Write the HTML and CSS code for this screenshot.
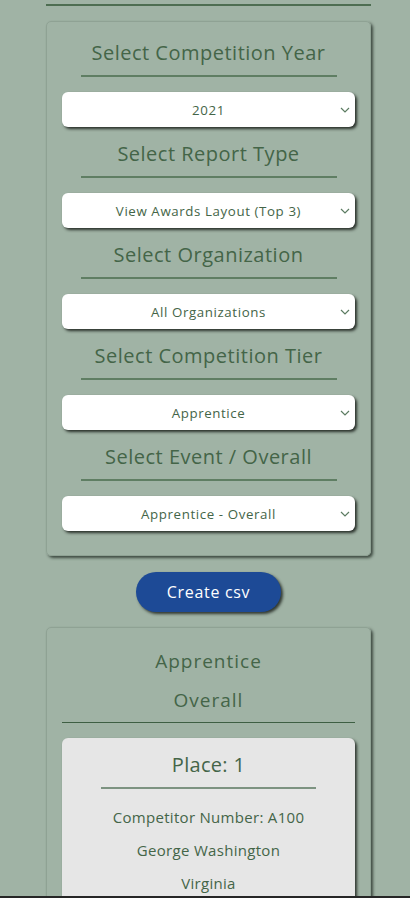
FILE: index.html
```html
<!DOCTYPE html>
<html lang="en">
<head>
<meta charset="utf-8">
<title>Competition Report</title>
<link rel="stylesheet" href="styles.css">
</head>
<body>
<div class="page">
  <div class="top-rule"></div>

  <section class="card filters">
    <div class="group">
      <h2 class="label">Select Competition Year</h2>
      <div class="rule"></div>
      <div class="select-wrap">
        <select class="select"><option>2021</option></select>
        <svg class="chev" width="10" height="6" viewBox="0 0 10 6"><path d="M1 1l4 4 4-4" fill="none" stroke="#5c7c62" stroke-width="1.2"/></svg>
      </div>
    </div>
    <div class="group">
      <h2 class="label">Select Report Type</h2>
      <div class="rule"></div>
      <div class="select-wrap">
        <select class="select"><option>View Awards Layout (Top 3)</option></select>
        <svg class="chev" width="10" height="6" viewBox="0 0 10 6"><path d="M1 1l4 4 4-4" fill="none" stroke="#5c7c62" stroke-width="1.2"/></svg>
      </div>
    </div>
    <div class="group">
      <h2 class="label">Select Organization</h2>
      <div class="rule"></div>
      <div class="select-wrap">
        <select class="select"><option>All Organizations</option></select>
        <svg class="chev" width="10" height="6" viewBox="0 0 10 6"><path d="M1 1l4 4 4-4" fill="none" stroke="#5c7c62" stroke-width="1.2"/></svg>
      </div>
    </div>
    <div class="group">
      <h2 class="label">Select Competition Tier</h2>
      <div class="rule"></div>
      <div class="select-wrap">
        <select class="select"><option>Apprentice</option></select>
        <svg class="chev" width="10" height="6" viewBox="0 0 10 6"><path d="M1 1l4 4 4-4" fill="none" stroke="#5c7c62" stroke-width="1.2"/></svg>
      </div>
    </div>
    <div class="group">
      <h2 class="label">Select Event / Overall</h2>
      <div class="rule"></div>
      <div class="select-wrap">
        <select class="select"><option>Apprentice - Overall</option></select>
        <svg class="chev" width="10" height="6" viewBox="0 0 10 6"><path d="M1 1l4 4 4-4" fill="none" stroke="#5c7c62" stroke-width="1.2"/></svg>
      </div>
    </div>
  </section>

  <div class="btn-row">
    <button class="btn">Create csv</button>
  </div>

  <section class="card results">
    <h3 class="res-title">Apprentice</h3>
    <h3 class="res-title">Overall</h3>
    <div class="res-rule"></div>
    <div class="place-card">
      <h4 class="place">Place: 1</h4>
      <div class="place-rule"></div>
      <p class="info">Competitor Number: A100</p>
      <p class="info">George Washington</p>
      <p class="info">Virginia</p>
    </div>
  </section>
</div>
<div class="bottom-bar"></div>
</body>
</html>
```

FILE: styles.css
```css
html, body {
  margin: 0;
  padding: 0;
}
body {
  background: #a0b3a5;
  font-family: "Open Sans", "Liberation Sans", sans-serif;
  color: #446548;
  overflow: hidden;
  height: 898px;
}
.page {
  padding-left: 46px;
  width: 325px;
}
.top-rule {
  height: 2px;
  background: #4e6e52;
  margin-top: 4px;
}
.card {
  border: 1px solid #8fa294;
  border-radius: 5px;
  box-shadow: 2px 2px 3px rgba(30, 40, 32, 0.75);
  box-sizing: border-box;
}
.filters {
  margin-top: 15px;
  padding: 16px 15px 24px;
}
.group + .group {
  margin-top: 12px;
}
.label {
  margin: 0;
  font-weight: 400;
  font-size: 20px;
  letter-spacing: 0.5px;
  line-height: 30px;
  padding-bottom: 7px;
  text-align: center;
  color: #446548;
}
.rule {
  width: 256px;
  height: 2px;
  margin: 0 auto;
  background: #5f7e63;
}
.select-wrap {
  position: relative;
  margin-top: 15px;
}
.select {
  display: block;
  width: 100%;
  height: 35px;
  appearance: none;
  -webkit-appearance: none;
  border: none;
  border-radius: 6px;
  background: #fff;
  box-shadow: 2px 2px 3px rgba(20, 25, 20, 0.85);
  font-family: inherit;
  font-size: 13.3px;
  letter-spacing: 0.6px;
  color: #446548;
  text-align: center;
  text-align-last: center;
  padding: 0 16px;
}
.chev {
  position: absolute;
  right: 5px;
  top: 15px;
}
.btn-row {
  display: flex;
  justify-content: center;
  margin-top: 16px;
}
.btn {
  width: 145px;
  height: 40px;
  border: none;
  border-radius: 20px;
  background: #1d4a96;
  color: #fff;
  font-family: inherit;
  font-size: 16px;
  letter-spacing: 0.7px;
  box-shadow: 2px 2px 3px rgba(20, 25, 20, 0.8);
}
.results {
  margin-top: 15px;
  padding: 14px 15px 0;
  height: 300px;
}
.res-title {
  margin: 0;
  font-weight: 400;
  font-size: 19px;
  letter-spacing: 1px;
  line-height: 39px;
  text-align: center;
}
.res-rule {
  height: 1px;
  background: #3e5f43;
  margin-top: 2px;
}
.place-card {
  margin-top: 15px;
  background: #e6e6e6;
  border-radius: 6px;
  box-shadow: 2px 2px 3px rgba(20, 25, 20, 0.8);
  padding-top: 13px;
  height: 200px;
}
.place {
  margin: 0;
  font-weight: 400;
  font-size: 20px;
  letter-spacing: 0.3px;
  line-height: 28px;
  text-align: center;
}
.place-rule {
  width: 215px;
  height: 2px;
  background: #7d9381;
  margin: 8px auto 0;
}
.info {
  margin: 0;
  font-size: 15px;
  letter-spacing: 0.3px;
  line-height: 33px;
  text-align: center;
}
.place-rule + .info {
  margin-top: 12px;
}
.bottom-bar {
  position: fixed;
  left: 0;
  right: 0;
  bottom: 0;
  height: 2px;
  background: #262626;
}
```
